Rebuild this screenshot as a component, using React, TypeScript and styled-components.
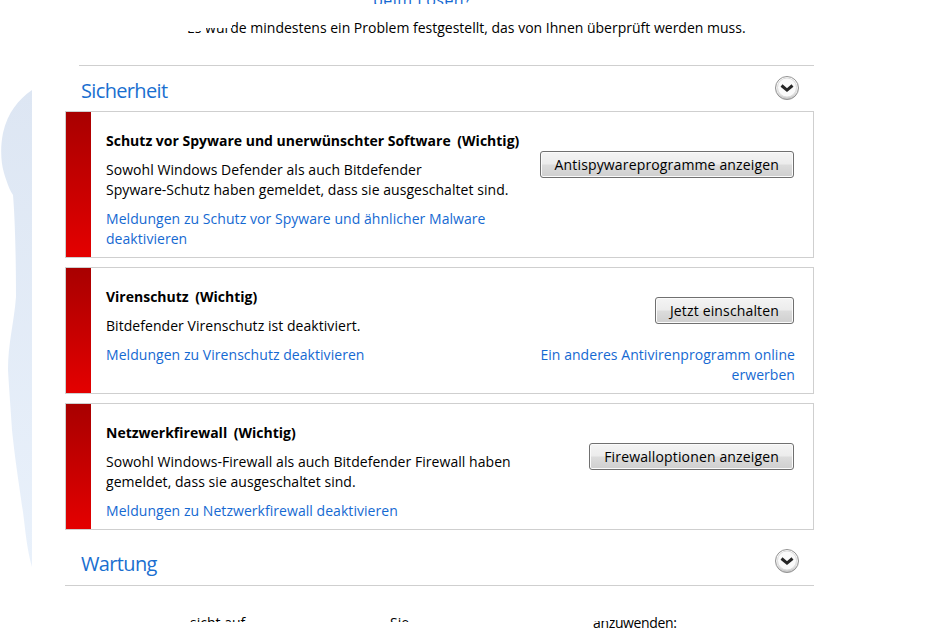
import styled, { createGlobalStyle } from "styled-components";

const GlobalStyle = createGlobalStyle`
  html, body {
    margin: 0;
    padding: 0;
    background: #fff;
    overflow: hidden;
  }
  body {
    font-family: "Open Sans", "Noto Sans", sans-serif;
    font-size: 14px;
    color: #000;
  }
`;

const Page = styled.div`
  position: relative;
  width: 929px;
  height: 638px;
  overflow: hidden;
  padding-left: 65px;
  box-sizing: border-box;
`;

const Backdrop = styled.svg`
  position: absolute;
  left: 0;
  top: 88px;
`;

const Column = styled.div`
  position: relative;
  width: 749px;
`;

const TopLink = styled.div`
  height: 4px;
  overflow: hidden;
  padding-left: 308px;
  font-size: 16px;
  letter-spacing: 0.5px;
  line-height: 0;
  color: #1569d2;
  white-space: nowrap;
`;

const Intro = styled.div`
  position: relative;
  margin: 14px 0 27px;
  height: 20px;
  line-height: 20px;
  padding-left: 122px;
  white-space: nowrap;
`;

const Eraser = styled.span<{ $left: number; $width: number; $height: number }>`
  position: absolute;
  left: ${({ $left }) => $left}px;
  top: 0;
  width: ${({ $width }) => $width}px;
  height: ${({ $height }) => $height}px;
  background: #fff;
`;

const SectionHead = styled.div<{ $line: "top" | "bottom" }>`
  display: flex;
  align-items: flex-start;
  justify-content: space-between;
  box-sizing: border-box;
  height: ${({ $line }) => ($line === "top" ? "46px" : "56px")};
  margin-left: ${({ $line }) => ($line === "top" ? "14px" : "0")};
  padding: ${({ $line }) => ($line === "top" ? "9px 14px 0 2px" : "18px 14px 0 16px")};
  border-top: ${({ $line }) => ($line === "top" ? "1px solid #cfcfcf" : "none")};
  border-bottom: ${({ $line }) => ($line === "bottom" ? "1px solid #cfcfcf" : "none")};
`;

const SectionTitle = styled.h2`
  margin: 2px 0 0;
  font-size: 20px;
  line-height: 27px;
  font-weight: 400;
  letter-spacing: -0.65px;
  color: #1a6fd0;
`;

const Cards = styled.div`
  display: flex;
  flex-direction: column;
  gap: 9px;
`;

const Card = styled.section<{ $height: number }>`
  display: flex;
  box-sizing: border-box;
  height: ${({ $height }) => $height}px;
  border: 1px solid #cfcfcf;
`;

const Severity = styled.div`
  flex: none;
  width: 25px;
  background: linear-gradient(#a80000, #e40000);
`;

const CardBody = styled.div`
  flex: 1;
  display: flex;
  justify-content: space-between;
  padding: 19px 19px 0 15px;
`;

const TextColumn = styled.div`
  width: 420px;
  letter-spacing: 0.05px;
`;

const CardTitle = styled.h3`
  margin: 0 0 9px;
  font-size: 14px;
  font-weight: 700;
  line-height: 20px;
  letter-spacing: 0;
  white-space: nowrap;
`;

const Importance = styled.span`
  margin-left: 3px;
`;

const Message = styled.p`
  margin: 0 0 9px;
  line-height: 20px;
`;

const ActionLink = styled.a`
  display: block;
  line-height: 20px;
  color: #1569d2;
`;

const ActionColumn = styled.div`
  display: flex;
  flex-direction: column;
  align-items: flex-end;
  letter-spacing: 0.05px;
`;

const ActionButton = styled.button<{ $offset: number }>`
  box-sizing: border-box;
  height: 27px;
  margin-top: ${({ $offset }) => $offset}px;
  padding: 0 14px;
  border: 1px solid #707070;
  border-radius: 3px;
  background: linear-gradient(#f4f4f4 0%, #ececec 48%, #dcdcdc 52%, #cfcfcf 100%);
  box-shadow: inset 0 0 0 1px #fbfbfb;
  font-family: inherit;
  font-size: 14px;
  letter-spacing: 0.15px;
  color: #000;
  white-space: nowrap;
`;

const SideLink = styled(ActionLink)`
  margin-top: 21px;
  margin-right: -1px;
  width: 258px;
  text-align: right;
`;

const Outro = styled.div`
  display: flex;
  margin-top: 27px;
  padding-left: 125px;
  height: 20px;
  line-height: 20px;
  white-space: nowrap;
`;

const OutroPiece = styled.span<{ $visible: number }>`
  position: relative;
  display: block;
  width: 200px;
  height: ${({ $visible }) => $visible}px;
  overflow: hidden;
`;

const OutroEnd = styled(OutroPiece)`
  padding-left: 3px;
  letter-spacing: -0.35px;
`;

function ExpandIcon() {
  return (
    <svg width="26" height="26" viewBox="0 0 26 26">
      <defs>
        <linearGradient id="expand-fill" x1="0" y1="0" x2="0" y2="1">
          <stop offset="0" stopColor="#ffffff" />
          <stop offset="0.55" stopColor="#f1f1f1" />
          <stop offset="1" stopColor="#c4c4c4" />
        </linearGradient>
      </defs>
      <circle cx="13" cy="13" r="11.5" fill="url(#expand-fill)" stroke="#929292" />
      <circle cx="13" cy="12.5" r="9.5" fill="#fafafa" stroke="#dcdcdc" />
      <path d="M7.5 10.5l5.5 4.6 5.5-4.6" fill="none" stroke="#262626" strokeWidth="3" />
    </svg>
  );
}

export default function App() {
  return (
    <Page>
      <GlobalStyle />
      <Backdrop width="32" height="482" viewBox="0 0 32 482">
        <defs>
          <linearGradient id="wash" x1="0" y1="0" x2="0" y2="1">
            <stop offset="0" stopColor="#dde6f3" />
            <stop offset="1" stopColor="#e9f1fb" />
          </linearGradient>
        </defs>
        <path
          d="M32 2 C18 12 8 24 3 45 C0 60 1 75 4 85 C7 95 10 103 13 107 C15 130 16 170 16 209 C14 235 8 255 8 282 C9 300 11 325 12 342 C16 380 20 400 24 432 C26 450 28 465 32 479 Z"
          fill="url(#wash)"
        />
      </Backdrop>
      <Column>
        <TopLink>beim Lösen?</TopLink>
        <Intro>
          Es wurde mindestens ein Problem festgestellt, das von Ihnen überprüft werden muss.
          <Eraser $left={120} $width={21} $height={13} />
          <Eraser $left={141} $width={26} $height={10} />
        </Intro>
        <SectionHead $line="top">
          <SectionTitle>Sicherheit</SectionTitle>
          <ExpandIcon />
        </SectionHead>
        <Cards>
          <Card $height={147}>
            <Severity />
            <CardBody>
              <TextColumn>
                <CardTitle>
                  Schutz vor Spyware und unerwünschter Software <Importance>(Wichtig)</Importance>
                </CardTitle>
                <Message>
                  Sowohl Windows Defender als auch Bitdefender
                  <br />
                  Spyware-Schutz haben gemeldet, dass sie ausgeschaltet sind.
                </Message>
                <ActionLink>
                  Meldungen zu Schutz vor Spyware und ähnlicher Malware
                  <br />
                  deaktivieren
                </ActionLink>
              </TextColumn>
              <ActionColumn>
                <ActionButton $offset={20}>Antispywareprogramme anzeigen</ActionButton>
              </ActionColumn>
            </CardBody>
          </Card>
          <Card $height={127}>
            <Severity />
            <CardBody>
              <TextColumn>
                <CardTitle>
                  Virenschutz <Importance>(Wichtig)</Importance>
                </CardTitle>
                <Message>Bitdefender Virenschutz ist deaktiviert.</Message>
                <ActionLink>Meldungen zu Virenschutz deaktivieren</ActionLink>
              </TextColumn>
              <ActionColumn>
                <ActionButton $offset={10}>Jetzt einschalten</ActionButton>
                <SideLink>Ein anderes Antivirenprogramm online erwerben</SideLink>
              </ActionColumn>
            </CardBody>
          </Card>
          <Card $height={127}>
            <Severity />
            <CardBody>
              <TextColumn>
                <CardTitle>
                  Netzwerkfirewall <Importance>(Wichtig)</Importance>
                </CardTitle>
                <Message>
                  Sowohl Windows-Firewall als auch Bitdefender Firewall haben
                  <br />
                  gemeldet, dass sie ausgeschaltet sind.
                </Message>
                <ActionLink>Meldungen zu Netzwerkfirewall deaktivieren</ActionLink>
              </TextColumn>
              <ActionColumn>
                <ActionButton $offset={20}>Firewalloptionen anzeigen</ActionButton>
              </ActionColumn>
            </CardBody>
          </Card>
        </Cards>
        <SectionHead $line="bottom">
          <SectionTitle>Wartung</SectionTitle>
          <ExpandIcon />
        </SectionHead>
        <Outro>
          <OutroPiece $visible={9}>sicht auf</OutroPiece>
          <OutroPiece $visible={9}>Sie</OutroPiece>
          <OutroEnd $visible={20}>
            anzuwenden:
            <Eraser $left={0} $width={20} $height={8} />
          </OutroEnd>
        </Outro>
      </Column>
    </Page>
  );
}
